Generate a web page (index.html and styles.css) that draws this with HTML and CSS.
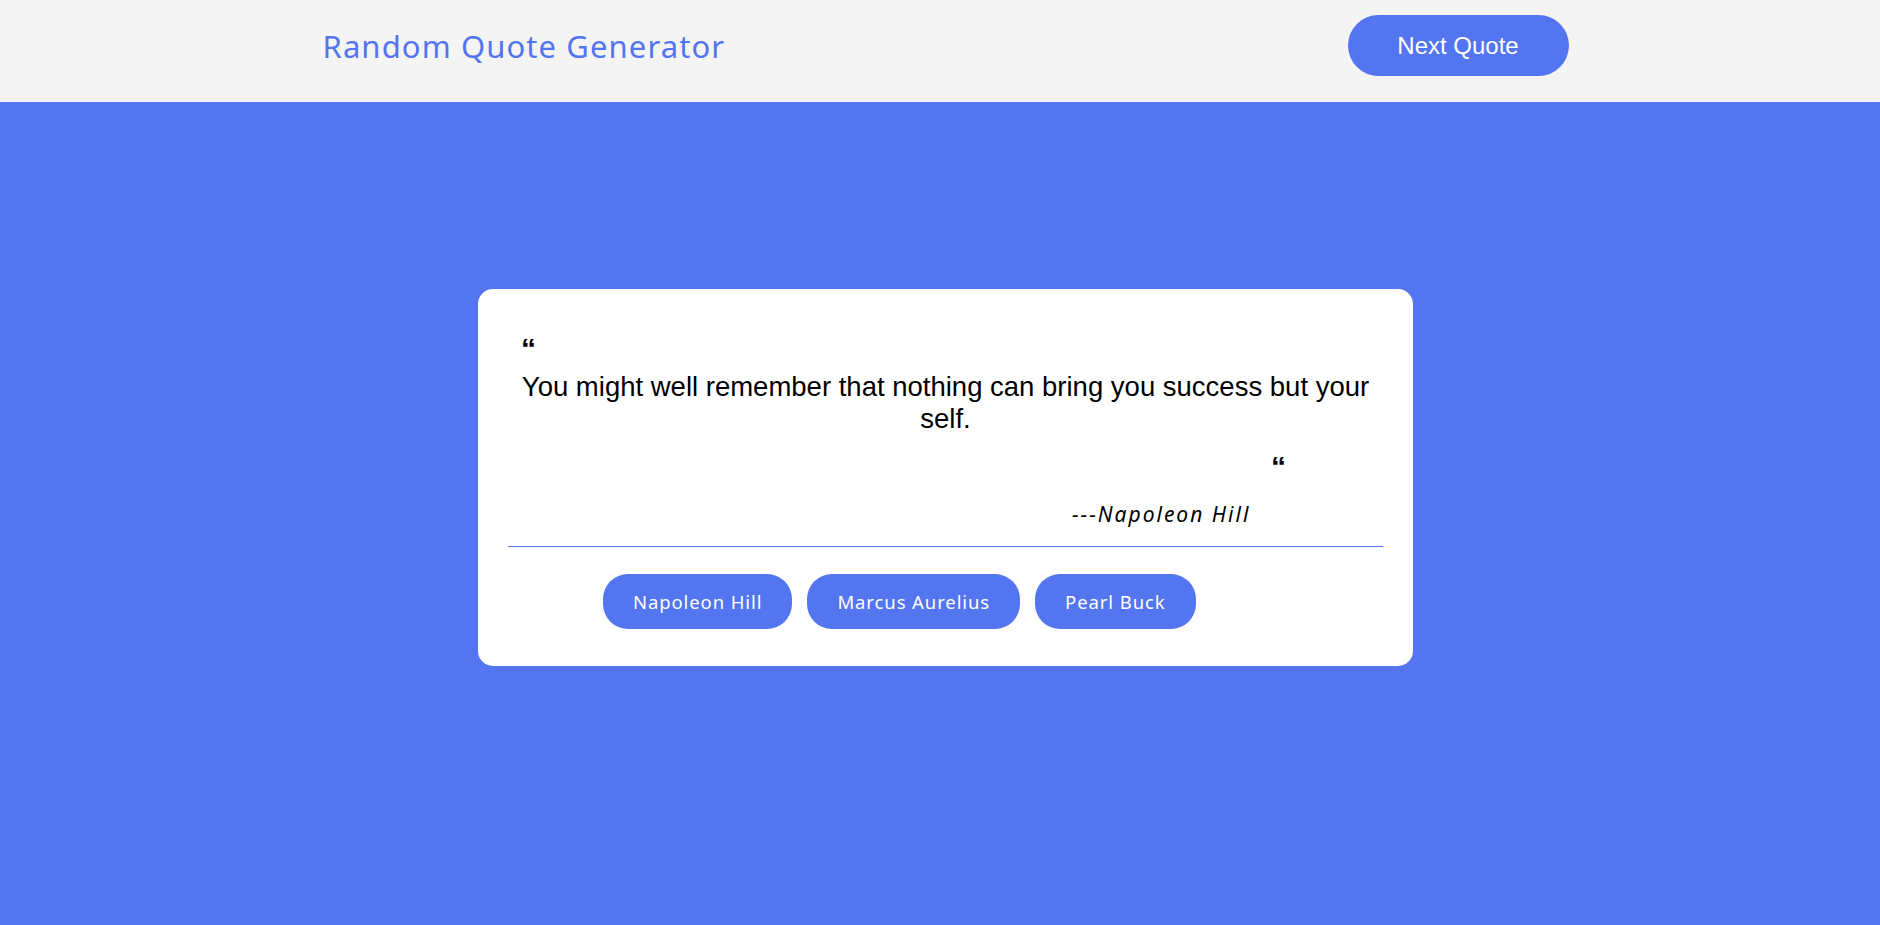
FILE: index.html
```html
<!DOCTYPE html>
<html lang="en">
<head>
<meta charset="utf-8">
<title>Random Quote Generator</title>
<link rel="stylesheet" href="styles.css">
</head>
<body>
<div class="page">
  <header class="topbar">
    <div class="topbar-inner">
      <h1 class="brand">Random Quote Generator</h1>
      <button class="next-btn">Next Quote</button>
    </div>
  </header>
  <main class="stage">
    <section class="card">
      <div class="quote-mark open">&ldquo;</div>
      <p class="quote-text">You might well remember that nothing can bring you success but your self.</p>
      <div class="quote-mark close">&ldquo;</div>
      <p class="author">---Napoleon Hill</p>
      <hr class="divider">
      <div class="authors">
        <button class="author-btn">Napoleon Hill</button>
        <button class="author-btn">Marcus Aurelius</button>
        <button class="author-btn">Pearl Buck</button>
      </div>
    </section>
  </main>
</div>
</body>
</html>
```

FILE: styles.css
```css
* { box-sizing: border-box; }

html, body {
  margin: 0;
  height: 100%;
}

body {
  background: #5375ef;
  font-family: "Liberation Sans", Arial, sans-serif;
}

.page {
  min-height: 100%;
  padding-left: 11px;
}

.topbar {
  background: #f4f4f4;
  height: 102px;
  margin-left: -11px;
  padding-left: 11px;
  padding-top: 15px;
}

.topbar-inner {
  width: 1246px;
  margin: 0 auto;
  height: 61px;
  display: flex;
  align-items: center;
  justify-content: space-between;
}

.brand {
  margin: 0;
  font-family: "Noto Sans", "Open Sans", sans-serif;
  font-weight: 400;
  font-size: 31px;
  color: #5375ef;
  letter-spacing: 1.1px;
}

.next-btn {
  width: 221px;
  height: 61px;
  border: none;
  border-radius: 31px;
  background: #5375ef;
  color: #fff;
  font-family: "Liberation Sans", Arial, sans-serif;
  font-size: 24px;
  cursor: pointer;
}

.stage {
  display: flex;
  justify-content: center;
  padding-top: 187px;
}

.card {
  width: 935px;
  background: #fff;
  border-radius: 15px;
  padding: 30px 30px 37px;
}

.quote-mark {
  font-family: "Liberation Sans", Arial, sans-serif;
  font-weight: 700;
  font-size: 30px;
  line-height: 20px;
  height: 20px;
  color: #000;
}

.quote-mark.open {
  margin: 20px 0 0 13px;
}

.quote-text {
  margin: 12px 0 0;
  text-align: center;
  font-size: 27.5px;
  line-height: 32px;
  color: #000;
}

.quote-mark.close {
  margin: 22px 0 0 763px;
}

.author {
  margin: 22px 0 0;
  padding-left: 564px;
  font-family: "Noto Sans", "Open Sans", sans-serif;
  font-style: italic;
  font-size: 21px;
  letter-spacing: 2px;
  line-height: 30px;
  color: #000;
}

.divider {
  margin: 17px 0 0;
  border: none;
  border-top: 1px solid #5375ef;
  height: 0;
}

.authors {
  display: flex;
  gap: 15px;
  margin-top: 27px;
  padding-left: 95px;
}

.author-btn {
  height: 55px;
  padding: 0 30px;
  border: none;
  border-radius: 25px;
  background: #5375ef;
  color: #fff;
  font-family: "Noto Sans", "Open Sans", sans-serif;
  font-size: 18.5px;
  letter-spacing: 0.9px;
  cursor: pointer;
}
```
